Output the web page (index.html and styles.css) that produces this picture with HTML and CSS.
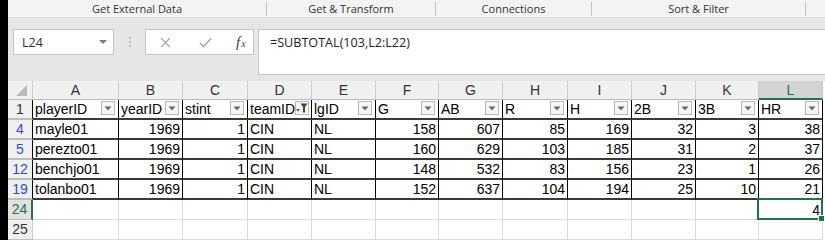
FILE: index.html
```html
<!DOCTYPE html>
<html lang="en">
<head>
    <meta charset="UTF-8">
    <title>Book1 - Excel</title>
    <link rel="stylesheet" href="styles.css">
</head>
<body>
    <div class="window">
        <div class="edge"></div>
        <div class="main">
            <div class="ribbon">
                <div class="group g-ext">Get External Data</div>
                <div class="group g-get">Get &amp; Transform</div>
                <div class="group g-conn">Connections</div>
                <div class="group g-sort">Sort &amp; Filter</div>
            </div>

            <div class="formula-area">
                <div class="name-box">
                    <span>L24</span>
                    <svg class="caret" width="8" height="5" viewBox="0 0 8 5"><path d="M0 0 L8 0 L4 4 Z" fill="#7b7b7b"/></svg>
                </div>
                <div class="grip"><span></span></div>
                <div class="fx-buttons">
                    <svg class="fx-btn" width="11" height="11" viewBox="0 0 11 11"><path d="M1 1 L10 10 M10 1 L1 10" stroke="#a9a9a9" stroke-width="1.2" fill="none"/></svg>
                    <svg class="fx-btn" width="13" height="11" viewBox="0 0 13 11"><path d="M1 6 L4.5 9.5 L12 1.5" stroke="#a9a9a9" stroke-width="1.6" fill="none"/></svg>
                    <span class="fx"><i>f</i><i class="x">x</i></span>
                </div>
                <div class="formula-input">=SUBTOTAL(103,L2:L22)</div>
            </div>

            <div class="sheet" id="sheet"></div>
        </div>
    </div>

    <script>
const cols = ['A', 'B', 'C', 'D', 'E', 'F', 'G', 'H', 'I', 'J', 'K', 'L'];
const heads = ['playerID', 'yearID', 'stint', 'teamID', 'lgID', 'G', 'AB', 'R', 'H', '2B', '3B', 'HR'];
const rows = [
    ['4', 'mayle01', 1969, 1, 'CIN', 'NL', 158, 607, 85, 169, 32, 3, 38],
    ['5', 'perezto01', 1969, 1, 'CIN', 'NL', 160, 629, 103, 185, 31, 2, 37],
    ['12', 'benchjo01', 1969, 1, 'CIN', 'NL', 148, 532, 83, 156, 23, 1, 26],
    ['19', 'tolanbo01', 1969, 1, 'CIN', 'NL', 152, 637, 104, 194, 25, 10, 21]
];

const arrow = '<svg width="8" height="5" viewBox="0 0 8 5"><path d="M0.5 0.5 L7.5 0.5 L4 4.5 Z" fill="#6b6b6b"/></svg>';
const funnel = '<svg width="12" height="10" viewBox="0 0 12 10"><path d="M0 6 L4 6 L2 8.5 Z" fill="#555"/><path d="M4.5 0.5 L11.5 0.5 L9 4 L9 9.5 L7 9.5 L7 4 Z" fill="#444"/></svg>';

let html = '<div class="corner"><svg width="11" height="11" viewBox="0 0 11 11"><path d="M11 0 L11 11 L0 11 Z" fill="#b9b9b9"/></svg></div>';

cols.forEach(c => {
    html += `<div class="colhead${c === 'L' ? ' active' : ''}">${c}</div>`;
});

html += '<div class="rowhead in-table">1</div>';
heads.forEach(h => {
    const icon = h === 'teamID' ? funnel : arrow;
    html += `<div class="cell tbl"><span>${h}</span><span class="filter">${icon}</span></div>`;
});

rows.forEach(r => {
    html += `<div class="rowhead in-table filtered">${r[0]}</div>`;
    r.slice(1).forEach(v => {
        const num = typeof v === 'number';
        html += `<div class="cell tbl${num ? ' num' : ''}">${v}</div>`;
    });
});

html += '<div class="rowhead active">24</div>';
cols.forEach(c => {
    html += c === 'L'
        ? '<div class="cell num selected">4<span class="handle"></span></div>'
        : '<div class="cell"></div>';
});

html += '<div class="rowhead">25</div>';
cols.forEach(() => {
    html += '<div class="cell"></div>';
});

document.getElementById('sheet').innerHTML = html;
    </script>
</body>
</html>
```

FILE: styles.css
```css
body {
    margin: 0;
    padding: 0;
    width: 825px;
    height: 240px;
    overflow: hidden;
    background-color: #ffffff;
    font-family: "Liberation Sans", Arial, sans-serif;
}

.window {
    display: flex;
    height: 240px;
}

.edge {
    width: 8px;
    flex: none;
    background-color: #000000;
}

.main {
    flex: 1;
    display: flex;
    flex-direction: column;
    overflow: hidden;
}

/* ribbon group labels */

.ribbon {
    display: flex;
    height: 17px;
    background-color: #f3f3f3;
    border-bottom: 1px solid #dcdcdc;
    font-family: "Open Sans", sans-serif;
    font-size: 11px;
    color: #333333;
}

.group {
    margin: 2px 0 1px;
    line-height: 14px;
    text-align: center;
    border-right: 1px solid #c3c3c3;
    box-sizing: border-box;
}

.g-ext { width: 259px; }
.g-get { width: 169px; }
.g-conn { width: 156px; }
.g-sort { width: 214px; }

/* name box and formula bar */

.formula-area {
    display: flex;
    align-items: flex-start;
    height: 68px;
    padding-top: 11px;
    box-sizing: border-box;
    background-color: #e6e6e6;
}

.name-box {
    display: flex;
    align-items: center;
    justify-content: space-between;
    width: 101px;
    height: 26px;
    margin-left: 5px;
    padding: 0 6px 0 8px;
    box-sizing: border-box;
    background-color: #ffffff;
    border: 1px solid #c6c6c6;
    font-family: "Open Sans", sans-serif;
    font-size: 12.5px;
    color: #333333;
}

.grip {
    display: flex;
    justify-content: center;
    width: 31px;
    padding-top: 8px;
}

.grip span {
    width: 0;
    height: 10px;
    border-left: 2px dotted #bdbdbd;
}

.fx-buttons {
    display: flex;
    align-items: center;
    width: 109px;
    height: 26px;
    padding-left: 14px;
    box-sizing: border-box;
    background-color: #ffffff;
    border: 1px solid #c6c6c6;
}

.fx-btn {
    margin-right: 28px;
}

.fx-btn + .fx-btn {
    margin-right: 24px;
}

.fx {
    font-family: "Liberation Serif", serif;
    font-size: 15px;
    color: #3f3f3f;
}

.fx .x {
    font-size: 10px;
    margin-left: 1px;
}

.formula-input {
    flex: 1;
    height: 46px;
    margin-left: 4px;
    margin-right: -2px;
    padding: 4px 11px;
    box-sizing: border-box;
    background-color: #ffffff;
    border: 1px solid #c6c6c6;
    font-family: "Open Sans", sans-serif;
    font-size: 12.6px;
    color: #222222;
}

/* worksheet grid */

.sheet {
    display: grid;
    grid-template-columns: 25px 86px 64px 65px 64px 64px 63px 64px 65px 64px 64px 63px 64px;
    grid-template-rows: 19px;
    grid-auto-rows: 20px;
    font-size: 14px;
    color: #000000;
}

.corner,
.colhead,
.rowhead {
    box-sizing: border-box;
    background-color: #f0f0f0;
    border-right: 1px solid #cbcbcb;
    border-bottom: 1px solid #bcbcbc;
    color: #333333;
    text-align: center;
}

.corner {
    display: flex;
    align-items: flex-end;
    justify-content: flex-end;
    padding: 0 5px 3px 0;
}

.colhead {
    line-height: 18px;
}

.colhead.active {
    background-color: #d3d3d3;
    color: #217346;
    border-bottom: 2px solid #217346;
}

.rowhead {
    line-height: 19px;
    font-size: 14px;
}

.rowhead.in-table {
    border-right-color: #000000;
    border-bottom: 2px solid #bdbdbd;
}

.rowhead.filtered {
    color: #2f49d6;
}

.rowhead.active {
    background-color: #e1e1e1;
    color: #217346;
    border-right: 2px solid #217346;
}

.cell {
    position: relative;
    display: flex;
    align-items: flex-end;
    padding: 0 2px 0 2px;
    box-sizing: border-box;
    border-right: 1px solid #dadada;
    border-bottom: 1px solid #dadada;
    line-height: 17px;
    white-space: nowrap;
}

.cell.tbl {
    border-right: 1px solid #000000;
    border-bottom: 2px solid #3a3a3a;
}

.cell.num {
    justify-content: flex-end;
}

.filter {
    display: flex;
    align-items: center;
    justify-content: center;
    width: 14px;
    height: 14px;
    margin: 0 1px 3px auto;
    box-sizing: border-box;
    background-color: #f5f5f5;
    border: 1px solid #b9b9b9;
}

.selected::after {
    content: "";
    position: absolute;
    top: -2px;
    left: -2px;
    right: -1px;
    bottom: -1px;
    border: 2px solid #217346;
}

.handle {
    position: absolute;
    right: -3px;
    bottom: -3px;
    width: 5px;
    height: 5px;
    background-color: #217346;
    border: 1px solid #ffffff;
    z-index: 1;
}
```
